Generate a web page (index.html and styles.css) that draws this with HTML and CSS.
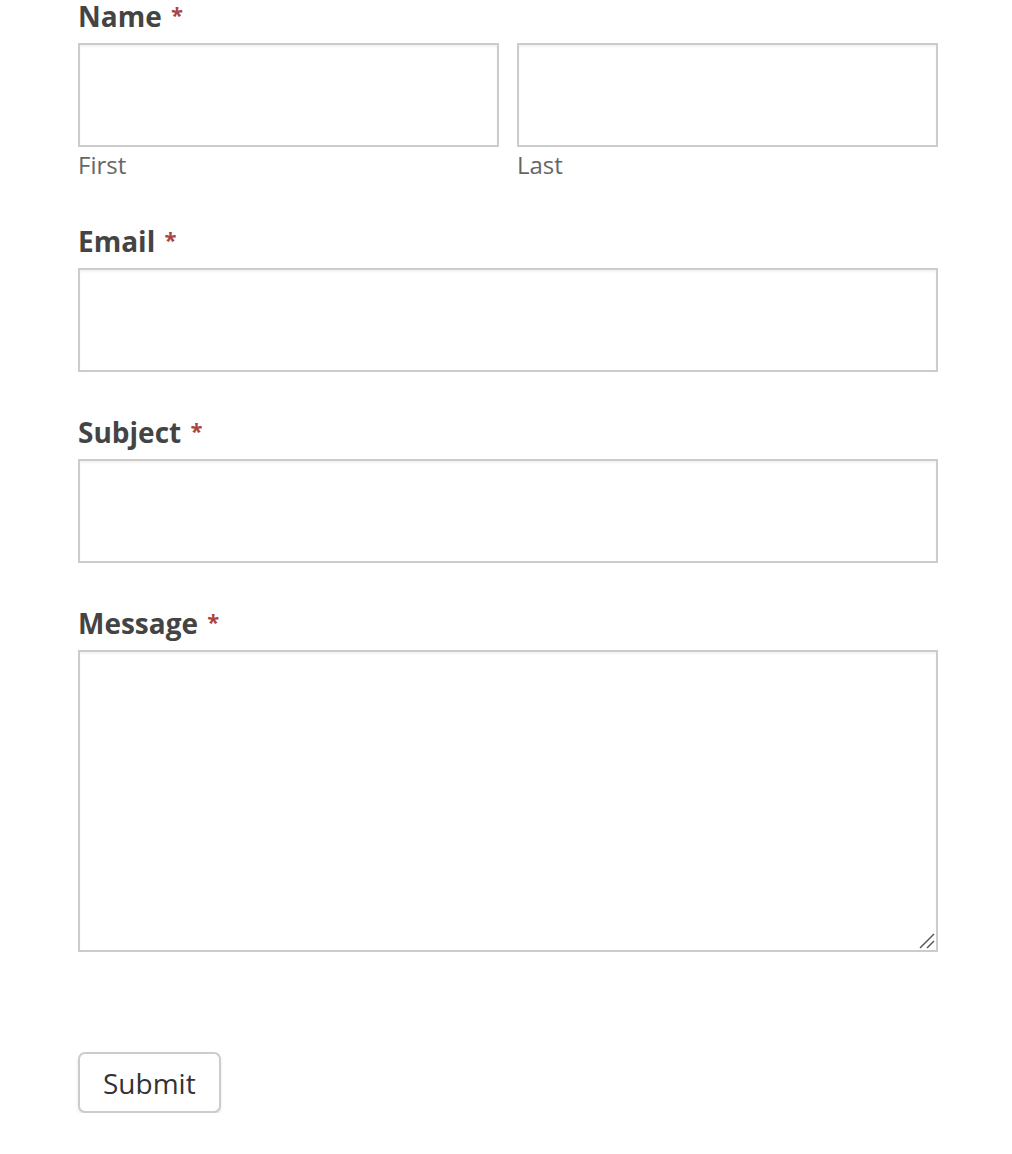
FILE: index.html
```html
<!DOCTYPE html>
<html lang="en">
<head>
    <meta charset="UTF-8">
    <meta name="viewport" content="width=device-width, initial-scale=1.0">
    <title>Contact Form</title>
    <link rel="stylesheet" href="styles.css">
</head>
<body>

    <form class="contact-form" onsubmit="return false;">
        <div class="field">
            <label class="field-label">Name <span class="required">*</span></label>
            <div class="name-row">
                <div class="name-part">
                    <input type="text" class="text-input">
                    <div class="sublabel">First</div>
                </div>
                <div class="name-part">
                    <input type="text" class="text-input">
                    <div class="sublabel">Last</div>
                </div>
            </div>
        </div>

        <div class="field">
            <label class="field-label">Email <span class="required">*</span></label>
            <input type="email" class="text-input">
        </div>

        <div class="field">
            <label class="field-label">Subject <span class="required">*</span></label>
            <input type="text" class="text-input">
        </div>

        <div class="field">
            <label class="field-label">Message <span class="required">*</span></label>
            <div class="area-wrap">
                <textarea class="text-area"></textarea>
                <svg class="grip" width="16" height="16" viewBox="0 0 16 16">
                    <line x1="1" y1="15" x2="15" y2="1" stroke="#555" stroke-width="1.5"/>
                    <line x1="8" y1="15" x2="15" y2="8" stroke="#555" stroke-width="1.5"/>
                </svg>
            </div>
        </div>

        <button type="submit" class="submit-button">Submit</button>
    </form>

</body>
</html>
```

FILE: styles.css
```css
body {
    font-family: "Open Sans", Arial, sans-serif;
    margin: 0;
    padding: 0;
    background-color: #fff;
    color: #444;
}

.contact-form {
    width: 860px;
    margin: 0 0 0 78px;
}

.field {
    margin-bottom: 44px;
}

.field-label {
    display: block;
    font-size: 28px;
    font-weight: 700;
    line-height: 32px;
    margin: 0 0 9px;
    color: #444;
}

.required {
    color: #a94442;
    font-size: 22px;
    position: relative;
    top: -4px;
    margin-left: 2px;
}

.name-row {
    display: flex;
    gap: 18px;
    margin-bottom: 3px;
}

.name-part {
    flex: 1;
}

.sublabel {
    font-size: 24px;
    color: #666;
    line-height: 32px;
    margin-top: 2px;
}

.text-input,
.text-area {
    display: block;
    box-sizing: border-box;
    width: 100%;
    height: 104px;
    border: 2px solid #ccc;
    box-shadow: inset 0 2px 2px rgba(0, 0, 0, 0.05);
    background-color: #fff;
    margin: 0;
    padding: 10px;
    font-size: 22px;
}

.area-wrap {
    position: relative;
}

.text-area {
    height: 302px;
    resize: none;
}

.grip {
    position: absolute;
    right: 3px;
    bottom: 3px;
}

.submit-button {
    display: block;
    margin-top: 100px;
    height: 61px;
    padding: 0 23px;
    font-family: "Open Sans", Arial, sans-serif;
    font-size: 28px;
    color: #333;
    background-color: #fff;
    border: 2px solid #ccc;
    border-radius: 7px;
    box-shadow: 0 2px 3px rgba(0, 0, 0, 0.1);
    cursor: pointer;
}
```
